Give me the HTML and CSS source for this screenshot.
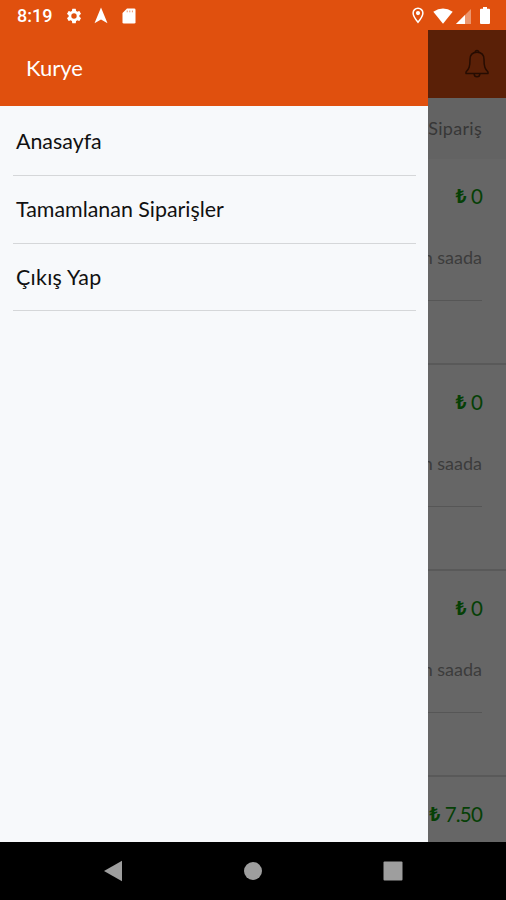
FILE: index.html
```html
<!DOCTYPE html>
<html lang="tr">

<head>
    <meta charset="UTF-8">
    <title>Kurye</title>
    <link rel="stylesheet" href="styles.css">
</head>

<body>
    <div class="phone">
        <div class="status-bar">
            <div class="status-left">
                <span class="clock">8:19</span>
                <svg class="icon-gear" width="18" height="18" viewBox="0 0 24 24"><path fill="#fff" d="M19.14 12.94c.04-.3.06-.61.06-.94s-.02-.64-.07-.94l2.03-1.58a.5.5 0 0 0 .12-.61l-1.92-3.32a.49.49 0 0 0-.59-.22l-2.39.96a7 7 0 0 0-1.62-.94l-.36-2.54a.48.48 0 0 0-.48-.41h-3.84a.47.47 0 0 0-.47.41l-.36 2.54c-.59.24-1.13.57-1.62.94l-2.39-.96a.48.48 0 0 0-.59.22L2.74 8.87a.47.47 0 0 0 .12.61l2.03 1.58a6 6 0 0 0 0 1.88l-2.03 1.58a.5.5 0 0 0-.12.61l1.92 3.32c.12.22.37.29.59.22l2.39-.96c.5.38 1.03.7 1.62.94l.36 2.54c.05.24.24.41.48.41h3.84c.24 0 .44-.17.47-.41l.36-2.54c.59-.24 1.13-.56 1.62-.94l2.39.96c.22.08.47 0 .59-.22l1.92-3.32a.47.47 0 0 0-.12-.61zM12 15.6a3.6 3.6 0 1 1 0-7.2 3.6 3.6 0 0 1 0 7.2z"/></svg>
                <svg class="icon-arrow" width="14" height="17" viewBox="0 0 14 17"><path fill="#fff" d="M7 0.5L13.5 16.2L7 12.6L0.5 16.2Z"/></svg>
                <svg class="icon-card" width="14" height="16" viewBox="0 0 14 16"><path fill="#fff" d="M5 .5h7.2a1.3 1.3 0 0 1 1.3 1.3v12.4a1.3 1.3 0 0 1-1.3 1.3H1.8a1.3 1.3 0 0 1-1.3-1.3V5z"/><path stroke="#e0500e" stroke-opacity=".6" stroke-width="1" d="M5.2 2.5v1.8M7.8 2.5v1.8M10.4 2.5v1.8"/></svg>
            </div>
            <div class="status-right">
                <svg width="12" height="17" viewBox="0 0 12 17"><path fill="none" stroke="#fff" stroke-width="1.5" d="M6 1.2a4.9 4.9 0 0 0-4.9 4.9c0 3.4 4.9 9.2 4.9 9.2s4.9-5.8 4.9-9.2A4.9 4.9 0 0 0 6 1.2z"/><circle cx="6" cy="6.1" r="2.1" fill="#fff"/></svg>
                <svg class="icon-wifi" width="20" height="16" viewBox="0 0 20 16"><path fill="#fff" d="M.3 3.8Q10-3 19.7 3.8L10 15.8z"/></svg>
                <svg class="icon-signal" width="15" height="15" viewBox="0 0 15 15"><path fill="#fff" fill-opacity=".4" d="M15 0v15H0z"/><path fill="#fff" d="M9 6v9H0z"/></svg>
                <svg class="icon-battery" width="10" height="17" viewBox="0 0 10 17"><path fill="#fff" d="M3 0h4v1.8h2a1 1 0 0 1 1 1V16a1 1 0 0 1-1 1H1a1 1 0 0 1-1-1V2.8a1 1 0 0 1 1-1h2z"/></svg>
            </div>
        </div>

        <div class="screen">
            <div class="drawer">
                <div class="drawer-header">Kurye</div>
                <div class="menu">
                    <div class="menu-item">Anasayfa</div>
                    <div class="menu-item">Tamamlanan Siparişler</div>
                    <div class="menu-item">Çıkış Yap</div>
                </div>
            </div>

            <div class="page">
                <div class="app-bar">
                    <svg width="26" height="32" viewBox="0 0 26 32"><path fill="none" stroke="#260c02" stroke-width="1.5" stroke-linejoin="round" d="M13 4.200C8.700 4.200 6 7 6 11.500c0 7-.9 9.500-4 12.500v1.600h22V24c-3.100-3-4-5.500-4-12.500 0-4.500-2.700-7.300-7-7.300z"/><path fill="none" stroke="#260c02" stroke-width="1.500" d="M11.200 4.200a1.800 1.800 0 1 1 3.600 0M10.200 26a2.800 2.800 0 0 0 5.600 0"/></svg>
                </div>
                <div class="summary">Sipariş</div>
                <div class="order">
                    <div class="price"><span class="lira">₺</span><span>0</span></div>
                    <div class="note">n saada</div>
                </div>
                <div class="order">
                    <div class="price"><span class="lira">₺</span><span>0</span></div>
                    <div class="note">n saada</div>
                </div>
                <div class="order">
                    <div class="price"><span class="lira">₺</span><span>0</span></div>
                    <div class="note">n saada</div>
                </div>
                <div class="order">
                    <div class="price"><span class="lira">₺</span><span>7.50</span></div>
                </div>
            </div>
        </div>

        <div class="nav-bar">
            <svg width="20" height="22" viewBox="0 0 20 22"><path fill="#9e9e9e" d="M19 .8v20.400L1 11z"/></svg>
            <svg width="20" height="20" viewBox="0 0 20 20"><circle cx="10" cy="10" r="9" fill="#9e9e9e"/></svg>
            <svg width="20" height="20" viewBox="0 0 20 20"><rect x=".5" y=".5" width="19" height="19" rx="1" fill="#9e9e9e"/></svg>
        </div>
    </div>
</body>

</html>
```

FILE: styles.css
```css
body {
    margin: 0;
    font-family: Lato, sans-serif;
    background-color: #000;
}

svg {
    display: block;
    flex-shrink: 0;
}

.phone {
    width: 506px;
    height: 900px;
    display: flex;
    flex-direction: column;
    overflow: hidden;
}

/* status bar */
.status-bar {
    height: 30px;
    flex-shrink: 0;
    box-sizing: border-box;
    padding: 1px 16px 0 17px;
    display: flex;
    justify-content: space-between;
    align-items: center;
    background-color: #e0500e;
}

.status-left,
.status-right {
    display: flex;
    align-items: center;
}

.clock {
    width: 48px;
    font-family: Roboto, sans-serif;
    font-size: 18px;
    font-weight: 500;
    line-height: 30px;
    color: #fff;
}

.icon-arrow {
    margin-left: 11px;
}

.icon-card {
    margin-left: 14px;
}

.icon-wifi {
    margin-left: 9px;
}

.icon-signal {
    margin-left: 3px;
    margin-top: 1px;
}

.icon-battery {
    margin-left: 9px;
}

.screen {
    height: 812px;
    flex-shrink: 0;
    display: flex;
}

/* drawer */
.drawer {
    width: 428px;
    flex-shrink: 0;
    background-color: #f7f9fb;
}

.drawer-header {
    height: 76px;
    padding-left: 26px;
    background-color: #e0500e;
    color: #fff;
    font-size: 22px;
    line-height: 76px;
}

.menu {
    padding: 2px 12px 0 13px;
}

.menu-item {
    height: 67px;
    padding-left: 3px;
    border-bottom: 1px solid #d5d7d9;
    color: #111;
    font-size: 21.4px;
    line-height: 67px;
    white-space: nowrap;
}

.menu-item:last-child {
    height: 66px;
    letter-spacing: 0.3px;
}

/* dimmed page behind the drawer */
.page {
    width: 78px;
    overflow: hidden;
    background-color: #666;
}

.app-bar {
    height: 68px;
    display: flex;
    justify-content: flex-end;
    align-items: center;
    padding-right: 16px;
    background-color: #5a2007;
}

.summary {
    height: 61px;
    display: flex;
    justify-content: flex-end;
    padding-right: 24px;
    background-color: #636363;
    color: #373737;
    font-size: 18px;
    letter-spacing: 0.3px;
    line-height: 60px;
}

.order {
    height: 206px;
    box-sizing: border-box;
    border-bottom: 2px solid #595959;
}

.price,
.note {
    display: flex;
    justify-content: flex-end;
    margin-right: 24px;
    white-space: nowrap;
}

.price {
    height: 75px;
    gap: 5px;
    color: #064006;
    font-size: 20.5px;
    letter-spacing: -0.8px;
    line-height: 74px;
}

.lira {
    font-family: "Noto Sans", sans-serif;
    font-size: 19px;
    font-weight: 700;
}

.note {
    height: 66px;
    border-bottom: 1px solid #565656;
    color: #3c3c3c;
    font-size: 18px;
    line-height: 47px;
}

/* navigation buttons */
.nav-bar {
    height: 58px;
    display: flex;
    justify-content: center;
    align-items: center;
    gap: 120px;
    background-color: #000;
}
```
